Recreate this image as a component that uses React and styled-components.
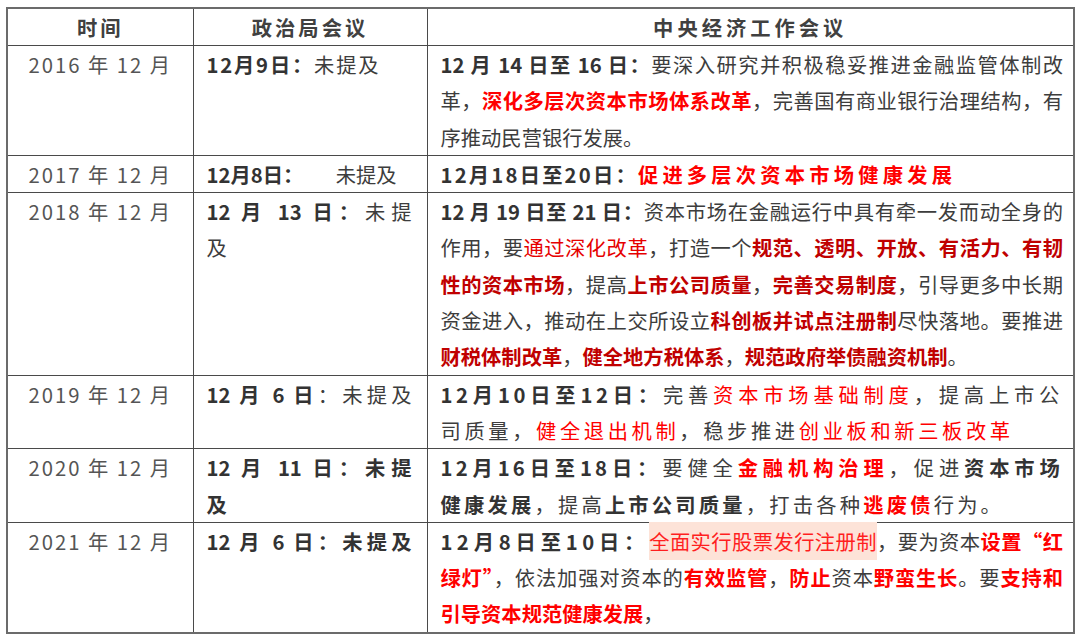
import React from 'react';
import styled, { createGlobalStyle, css } from 'styled-components';

const GlobalStyle = createGlobalStyle`
  html, body {
    margin: 0;
    background: #fff;
  }
  body {
    font-family: "Noto Sans CJK SC", "Noto Sans", sans-serif;
    color: #3d3d3d;
  }
`;

const Page = styled.div`
  padding: 7px 7px 0 6px;
`;

const Table = styled.table`
  width: 1067px;
  table-layout: fixed;
  border-collapse: collapse;
  border: 2px solid #6b6b6b;
  font-size: 20.3px;
`;

const Col = styled.col`
  width: ${(p) => p.$w}px;
`;

const Th = styled.th`
  height: 36px;
  padding: 0;
  border: 1px solid #4a4a4a;
  font-weight: 700;
  letter-spacing: ${(p) => p.$spacing || 3}px;
  color: #404040;
  text-align: center;
  line-height: 35px;
`;

const YearCell = styled.td`
  vertical-align: top;
  text-align: center;
  padding: 0;
  border: 1px solid #4a4a4a;
  color: #555;
  letter-spacing: 2px;
  line-height: 36.3px;
`;

const Cell = styled.td`
  vertical-align: top;
  padding: ${(p) => (p.$narrow ? '0 15px 0 13px' : '0 10px 0 13px')};
  border: 1px solid #4a4a4a;
  line-height: 36.3px;
  letter-spacing: ${(p) => p.$spacing || 0}px;
`;

const Line = styled.div`
  text-align: justify;
  text-align-last: ${(p) => (p.$end ? 'left' : 'justify')};

  ${(p) =>
    p.$split &&
    css`
      display: flex;
      justify-content: space-between;
      padding-right: 15px;
    `}
`;

const B = styled.b`
  font-weight: 700;
  color: #333;
  letter-spacing: ${(p) => (p.$spacing != null ? `${p.$spacing}px` : 'inherit')};
`;

const Red = styled.span`
  color: ${(p) => (p.$dark ? '#c00000' : p.$soft ? '#e60000' : '#ff0000')};
  font-weight: ${(p) => (p.$bold ? 700 : 400)};
  letter-spacing: ${(p) => (p.$spacing != null ? `${p.$spacing}px` : 'inherit')};
`;

const Mark = styled.span`
  background: #fde3d8;
  color: #ff1f1f;
  padding: 4px 0;
`;

export default function App() {
  return (
    <Page>
      <GlobalStyle />
      <Table>
        <colgroup>
          <Col $w={186} />
          <Col $w={234} />
          <Col $w={647} />
        </colgroup>
        <thead>
          <tr>
            <Th>时间</Th>
            <Th>政治局会议</Th>
            <Th $spacing={4}>中央经济工作会议</Th>
          </tr>
        </thead>
        <tbody>
          <tr>
            <YearCell>2016 年 12 月</YearCell>
            <Cell $narrow $spacing={1.8}>
              <Line $end>
                <B>12月9日：</B>未提及
              </Line>
            </Cell>
            <Cell>
              <Line>
                <B>12 月 14 日至 16 日：</B>要深入研究并积极稳妥推进金融监管体制改
              </Line>
              <Line>
                革，<Red $bold>深化多层次资本市场体系改革</Red>，完善国有商业银行治理结构，有
              </Line>
              <Line $end>序推动民营银行发展。</Line>
            </Cell>
          </tr>
          <tr>
            <YearCell>2017 年 12 月</YearCell>
            <Cell $narrow>
              <Line $split>
                <B>12月8日：</B>
                <span>未提及</span>
              </Line>
            </Cell>
            <Cell>
              <Line $end>
                <B $spacing={2.2}>12月18日至20日：</B>
                <Red $bold $spacing={4.2}>
                  促进多层次资本市场健康发展
                </Red>
              </Line>
            </Cell>
          </tr>
          <tr>
            <YearCell>2018 年 12 月</YearCell>
            <Cell $narrow>
              <Line>
                <B>12 月 13 日：</B>未提
              </Line>
              <Line $end>及</Line>
            </Cell>
            <Cell>
              <Line>
                <B>12 月 19 日至 21 日：</B>资本市场在金融运行中具有牵一发而动全身的
              </Line>
              <Line>
                作用，要<Red $soft>通过深化改革</Red>，打造一个
                <Red $dark $bold>规范、透明、开放、有活力、有韧</Red>
              </Line>
              <Line>
                <Red $dark $bold>性的资本市场</Red>，提高
                <Red $dark $bold>上市公司质量</Red>，
                <Red $dark $bold>完善交易制度</Red>，引导更多中长期
              </Line>
              <Line>
                资金进入，推动在上交所设立
                <Red $dark $bold>科创板并试点注册制</Red>尽快落地。要推进
              </Line>
              <Line $end>
                <Red $dark $bold>财税体制改革</Red>，
                <Red $dark $bold>健全地方税体系</Red>，
                <Red $dark $bold>规范政府举债融资机制</Red>。
              </Line>
            </Cell>
          </tr>
          <tr>
            <YearCell>2019 年 12 月</YearCell>
            <Cell $narrow>
              <Line>
                <B>12 月 6 日</B>：未提及
              </Line>
            </Cell>
            <Cell $spacing={3.6}>
              <Line>
                <B>12月10日至12日：</B>完善<Red>资本市场基础制度</Red>，提高上市公
              </Line>
              <Line $end>
                司质量，<Red>健全退出机制</Red>，稳步推进<Red>创业板和新三板改革</Red>
              </Line>
            </Cell>
          </tr>
          <tr>
            <YearCell>2020 年 12 月</YearCell>
            <Cell $narrow>
              <Line>
                <B>12 月 11 日：未提</B>
              </Line>
              <Line $end>
                <B>及</B>
              </Line>
            </Cell>
            <Cell $spacing={3.2}>
              <Line>
                <B>12月16日至18日：</B>要健全<Red $bold>金融机构治理</Red>，促进
                <B>资本市场</B>
              </Line>
              <Line $end>
                <B>健康发展</B>，提高<B>上市公司质量</B>，打击各种
                <Red $bold>逃废债</Red>行为。
              </Line>
            </Cell>
          </tr>
          <tr>
            <YearCell>2021 年 12 月</YearCell>
            <Cell $narrow>
              <Line>
                <B>12 月 6 日：未提及</B>
              </Line>
            </Cell>
            <Cell>
              <Line>
                <B $spacing={4.4}>12月8日至10日：</B>
                <Mark>全面实行股票发行注册制</Mark>，要为资本
                <Red $bold>设置“红</Red>
              </Line>
              <Line>
                <Red $bold>绿灯”</Red>，依法加强对资本的<Red $bold>有效监管</Red>，
                <Red $bold>防止</Red>资本<Red $bold>野蛮生长</Red>。要
                <Red $bold>支持和</Red>
              </Line>
              <Line $end>
                <Red $bold>引导资本规范健康发展</Red>，
              </Line>
            </Cell>
          </tr>
        </tbody>
      </Table>
    </Page>
  );
}
